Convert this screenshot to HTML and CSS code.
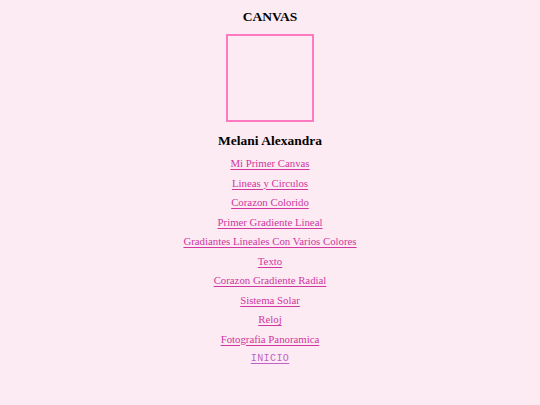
FILE: index.html
```html
<!DOCTYPE html>
<html lang="es">
<head>
<meta charset="utf-8">
<title>Canvas</title>
<link rel="stylesheet" href="styles.css">
</head>
<body>
<main class="page">
  <h1 class="title">CANVAS</h1>
  <div class="canvas"></div>
  <h2 class="name">Melani Alexandra</h2>
  <nav class="links">
    <a href="#">Mi Primer Canvas</a>
    <a href="#">Lineas y Circulos</a>
    <a href="#">Corazon Colorido</a>
    <a href="#">Primer Gradiente Lineal</a>
    <a href="#">Gradiantes Lineales Con Varios Colores</a>
    <a href="#">Texto</a>
    <a href="#">Corazon Gradiente Radial</a>
    <a href="#">Sistema Solar</a>
    <a href="#">Reloj</a>
    <a href="#">Fotografia Panoramica</a>
    <a href="#" class="home">INICIO</a>
  </nav>
</main>
</body>
</html>
```
FILE: styles.css
```css
html, body {
  margin: 0;
  padding: 0;
  background: #fdebf4;
}
.page {
  display: flex;
  flex-direction: column;
  align-items: center;
  font-family: "Liberation Serif", "Times New Roman", serif;
  padding-top: 9px;
}
.title {
  margin: 0;
  font-size: 13.5px;
  line-height: 16px;
  font-weight: bold;
  color: #000;
}
.canvas {
  margin-top: 9px;
  width: 84px;
  height: 84px;
  border: 2.5px solid #fd7ac0;
}
.name {
  margin: 10px 0 0 0;
  font-size: 13.5px;
  line-height: 18px;
  font-weight: bold;
  color: #000;
}
.links {
  display: flex;
  flex-direction: column;
  align-items: center;
  margin-top: 4px;
}
.links a {
  font-size: 10.8px;
  line-height: 19.5px;
  color: #d0369e;
  text-underline-offset: 1.5px;
}
.links a.home {
  font-family: "Liberation Mono", "Courier New", monospace;
  font-size: 10px;
  color: #c060c8;
  letter-spacing: 0.4px;
}
```
